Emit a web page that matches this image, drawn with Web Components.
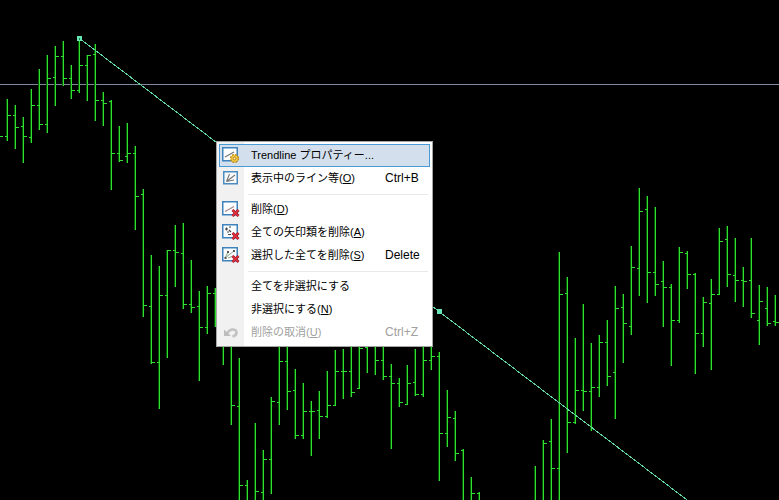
<!DOCTYPE html>
<html lang="ja">
<head>
<meta charset="utf-8">
<meta name="viewport" content="width=device-width, initial-scale=1">
<title>Trendline</title>
<style>
  body {
    margin: 0;
    background: #000;
    font-family: "Liberation Sans", "Noto Sans CJK JP", sans-serif;
    font-size: 11px;
  }
  context-menu {
    position: absolute;
    left: 216px;
    top: 141px;
  }
</style>
</head>
<body>
<price-chart>
  <context-menu>
    <menu-item icon="properties" selected>Trendline プロパティー...</menu-item>
    <menu-item icon="lines" shortcut="Ctrl+B">表示中のライン等(<u>O</u>)</menu-item>
    <menu-separator></menu-separator>
    <menu-item icon="delete-line">削除(<u>D</u>)</menu-item>
    <menu-item icon="delete-arrows">全ての矢印類を削除(<u>A</u>)</menu-item>
    <menu-item icon="delete-selected" shortcut="Delete">選択した全てを削除(<u>S</u>)</menu-item>
    <menu-separator></menu-separator>
    <menu-item>全てを非選択にする</menu-item>
    <menu-item>非選択にする(<u>N</u>)</menu-item>
    <menu-item icon="undo" shortcut="Ctrl+Z" disabled>削除の取消(<u>U</u>)</menu-item>
  </context-menu>
</price-chart>

<script>
// x, high, low, open, close (null = no tick)
const BARS = [
  [-1, 110, 140, null, 136],
  [7, 99, 141, 136, 115], [15, 105, 149, 115, 127], [23, 117, 163, 126, 136],
  [31, 89, 143, 137, 105], [39, 69, 130, 105, 124], [47, 55, 133, 124, 78],
  [55, 46, 106, 77, 56], [63, 41, 86, 56, 78], [71, 65, 99, 78, 90],
  [79, 38, 93, 90, 65], [87, 55, 101, 65, 55], [95, 44, 121, 54, 100],
  [103, 92, 126, 100, 103], [111, 100, 190, 101, 153], [119, 126, 162, 153, 160],
  [127, 123, 163, 156, 153], [135, 146, 230, 153, 196], [143, 189, 317, 194, 305],
  [151, 255, 364, 306, 362], [159, 266, 409, 362, 295], [167, 250, 358, 295, 250],
  [175, 225, 287, 250, 252], [183, 223, 309, 253, 304], [191, 260, 313, 304, 307],
  [199, 291, 381, 306, 327], [207, 286, 334, 327, 293], [215, 288, 327, 293, null],
  [223, 300, 365, null, null], [231, 320, 425, null, 405], [239, 358, 510, 406, 485],
  [247, 480, 540, 485, null], [255, 423, 520, null, 491], [263, 450, 520, 492, 459],
  [271, 397, 494, 459, 401], [279, 330, 425, 402, 361], [287, 330, 410, 361, 391],
  [295, 369, 439, 390, 435], [303, 383, 439, 435, 411], [311, 401, 456, 411, 411],
  [319, 391, 439, 410, 416], [327, 371, 418, 416, 405], [335, 350, 406, 405, 371],
  [343, 349, 399, 371, 371], [351, 346, 397, 371, 392], [359, 330, 389, 388, 348],
  [367, 330, 373, 347, null], [375, 330, 375, null, 360], [383, 330, 380, 360, 376],
  [391, 364, 449, 376, 383], [399, 378, 407, 383, 402], [407, 365, 405, 404, 383],
  [415, 349, 396, 382, 394], [423, 330, 397, 394, 360], [431, 330, 370, 360, 356],
  [439, 352, 481, 356, 433], [447, 390, 447, 433, 417], [455, 411, 461, 418, 453],
  [463, 449, 510, 450, null], [471, 477, 510, null, 493], [479, 492, 520, 493, null],
  [535, 466, 520, null, null], [543, 440, 520, null, 443], [551, 419, 520, 441, 468],
  [559, 252, 510, 468, 294], [567, 277, 453, 293, 422], [575, 338, 424, 422, 390],
  [583, 304, 411, 390, 391], [591, 343, 431, 391, 387], [599, 335, 397, 387, 342],
  [607, 320, 386, 342, 376], [615, 286, 419, 372, 308], [623, 294, 363, 307, 323],
  [631, 246, 335, 326, 267], [639, 188, 296, 268, 211], [647, 196, 303, 209, 272],
  [655, 207, 296, 272, 284], [663, 261, 327, 281, 287], [671, 284, 366, 287, 320],
  [679, 247, 323, 320, 252], [687, 251, 289, 253, 274], [695, 273, 374, 274, 333],
  [703, 297, 347, 333, 302], [711, 279, 370, 303, 294], [719, 228, 295, 294, 241],
  [727, 226, 287, 239, 274], [735, 238, 302, 275, 280], [743, 267, 307, 280, 281],
  [751, 238, 318, 280, 313], [759, 285, 345, 320, 301], [767, 287, 326, 308, 323],
  [775, 295, 326, 321, 322]
];

const FRAME = '<rect x=".75" y="1.75" width="14.5" height="13" fill="#fbfdff" stroke="#3f83bd" stroke-width="1.5"/>';
const CROSS = '<path d="M10.5 10l6 6M16.5 10l-6 6" stroke="#8e1a2b" stroke-width="2.8"/><path d="M10.5 10l6 6M16.5 10l-6 6" stroke="#e8303c" stroke-width="1.5"/>';

const ICONS = {
  'properties': FRAME + `
    <path d="M3 11l9-5" stroke="#777" stroke-width="1.2"/>
    <circle cx="12.5" cy="12.5" r="3.8" fill="#e9b92c" stroke="#b98513" stroke-width="1.6" stroke-dasharray="1.8 1.2"/>
    <circle cx="12.5" cy="12.5" r="3.2" fill="#efc640"/>
    <circle cx="12.5" cy="12.5" r="1.3" fill="#fff3c0" stroke="#a87710" stroke-width=".8"/>`,
  'lines': `
    <rect x="1.75" y="2.75" width="13.5" height="12" fill="#f7fafc" stroke="#4d8cc0" stroke-width="1.5"/>
    <path d="M4.5 12.5L7.5 5M4.5 12.5L13 6M4.5 12.5L12 11" stroke="#777" stroke-width="1.1"/>`,
  'delete-line': FRAME + '<path d="M3 11.5l9-5" stroke="#a88" stroke-width="1.2"/>' + CROSS,
  'delete-arrows': FRAME + `
    <path d="M3 6h3M4.5 4.5v3M7 4h2M5 9h2M7 7l2 2M6 11.5h3" stroke="#444" stroke-width="1.2"/>` + CROSS,
  'delete-selected': FRAME + `
    <path d="M3 12L6 6M3 12l9-7M6 12l5-2" stroke="#8aa58a"/>
    <path d="M5 5h2v2H5zM11 4h2v2h-2zM2.5 11h2v2h-2z" fill="#555"/>` + CROSS,
  'undo': `
    <path d="M5 10.5C8 5 14.5 5.5 14.5 9.5c0 2-1.5 3.5-4 4" stroke="#c2c2c2" stroke-width="2.6"/>
    <path d="M2 6.5v6.5h7z" fill="#bdbdbd"/>`
};

class PriceChart extends HTMLElement {
  constructor() {
    super();
    this.attachShadow({ mode: 'open' });
  }

  connectedCallback() {
    this.shadowRoot.innerHTML = `
      <style>
        :host {
          display: block;
          position: relative;
          height: 100vh;
          overflow: hidden;
          background: #000;
        }
        svg {
          display: block;
          width: 100%;
          height: 100%;
        }
        .edges { fill: #005a00; }
        .bars { fill: #32dc32; }
        .price { stroke: #7f8ba0; }
        .trend { stroke: #62d6a2; shape-rendering: crispEdges; }
        .handle { fill: #66e6b4; }
      </style>
      <svg aria-hidden="true">
        <line class="price" x1="0" y1="84.5" x2="100%" y2="84.5"/>
        <path class="edges" d="${BARS.map(this.edgePath).join('')}"/>
        <path class="bars" d="${BARS.map(this.barPath).join('')}"/>
        <line class="trend" x1="79" y1="38" x2="799" y2="585"/>
        <rect class="handle" x="77" y="36" width="5" height="5"/>
        <rect x="79" y="38" width="1" height="2" fill="#247a55"/>
        <rect class="handle" x="437" y="309" width="5" height="5"/>
      </svg>
      <slot></slot>
    `;
  }

  // dark green edge on the left of each bar
  edgePath([x, high, low]) {
    return `M${x - 1} ${high}h1V${low}h-1z`;
  }

  // one pixel wide boxes: the bar, then the open tick and the close tick
  barPath([x, high, low, open, close]) {
    let d = `M${x} ${high}h1V${low}h-1z`;
    if (open !== null) d += `M${x - 2} ${open}h2v1h-2z`;
    if (close !== null) d += `M${x + 1} ${close}h3v1h-3z`;
    return d;
  }
}

class ContextMenu extends HTMLElement {
  constructor() {
    super();
    this.attachShadow({ mode: 'open' });
  }

  connectedCallback() {
    this.setAttribute('role', 'menu');
    this.shadowRoot.innerHTML = `
      <style>
        :host {
          display: flex;
          flex-direction: column;
          box-sizing: border-box;
          width: 217px;
          padding: 2px;
          border: 1px solid #a5a5a5;
          /* icon gutter on the left */
          background: linear-gradient(to right, #f1f1f1 27px, #fff 27px);
        }
      </style>
      <slot></slot>
    `;
  }
}

class MenuItem extends HTMLElement {
  constructor() {
    super();
    this.attachShadow({ mode: 'open' });
  }

  connectedCallback() {
    const icon = ICONS[this.getAttribute('icon')] || '';
    const shortcut = this.getAttribute('shortcut');
    const disabled = this.hasAttribute('disabled') ? 'disabled' : '';

    this.shadowRoot.innerHTML = `
      <style>
        :host { display: block; }
        button {
          display: flex;
          align-items: center;
          box-sizing: border-box;
          width: 100%;
          height: 23px;
          margin: 0;
          padding: 0 0 2px 2px;
          border: 1px solid transparent;
          background: none;
          color: #000;
          font: inherit;
          line-height: 16px;
          text-align: left;
          white-space: nowrap;
        }
        :host([selected]) button,
        button:enabled:hover {
          border-color: #4a9ad8;
          background: #d3dfec;
        }
        button:disabled { color: #a0a0a0; }
        svg {
          flex: none;
          width: 18px;
          height: 17px;
          margin-right: 11px;
        }
        .label { flex: 1; }
        .shortcut {
          width: 44px;
          font-size: 12px;
        }
      </style>
      <button type="button" role="menuitem" ${disabled}>
        <svg viewBox="0 0 18 17" fill="none" aria-hidden="true">${icon}</svg>
        <span class="label"><slot></slot></span>
        ${shortcut ? `<span class="shortcut">${shortcut}</span>` : ''}
      </button>
    `;
  }
}

class MenuSeparator extends HTMLElement {
  constructor() {
    super();
    this.attachShadow({ mode: 'open' });
  }

  connectedCallback() {
    this.setAttribute('role', 'separator');
    this.shadowRoot.innerHTML = `
      <style>
        :host {
          display: block;
          height: 1px;
          margin: 4px 2px 3px 29px;
          background: #e8e8e8;
        }
      </style>
    `;
  }
}

customElements.define('price-chart', PriceChart);
customElements.define('context-menu', ContextMenu);
customElements.define('menu-item', MenuItem);
customElements.define('menu-separator', MenuSeparator);
</script>
</body>
</html>
